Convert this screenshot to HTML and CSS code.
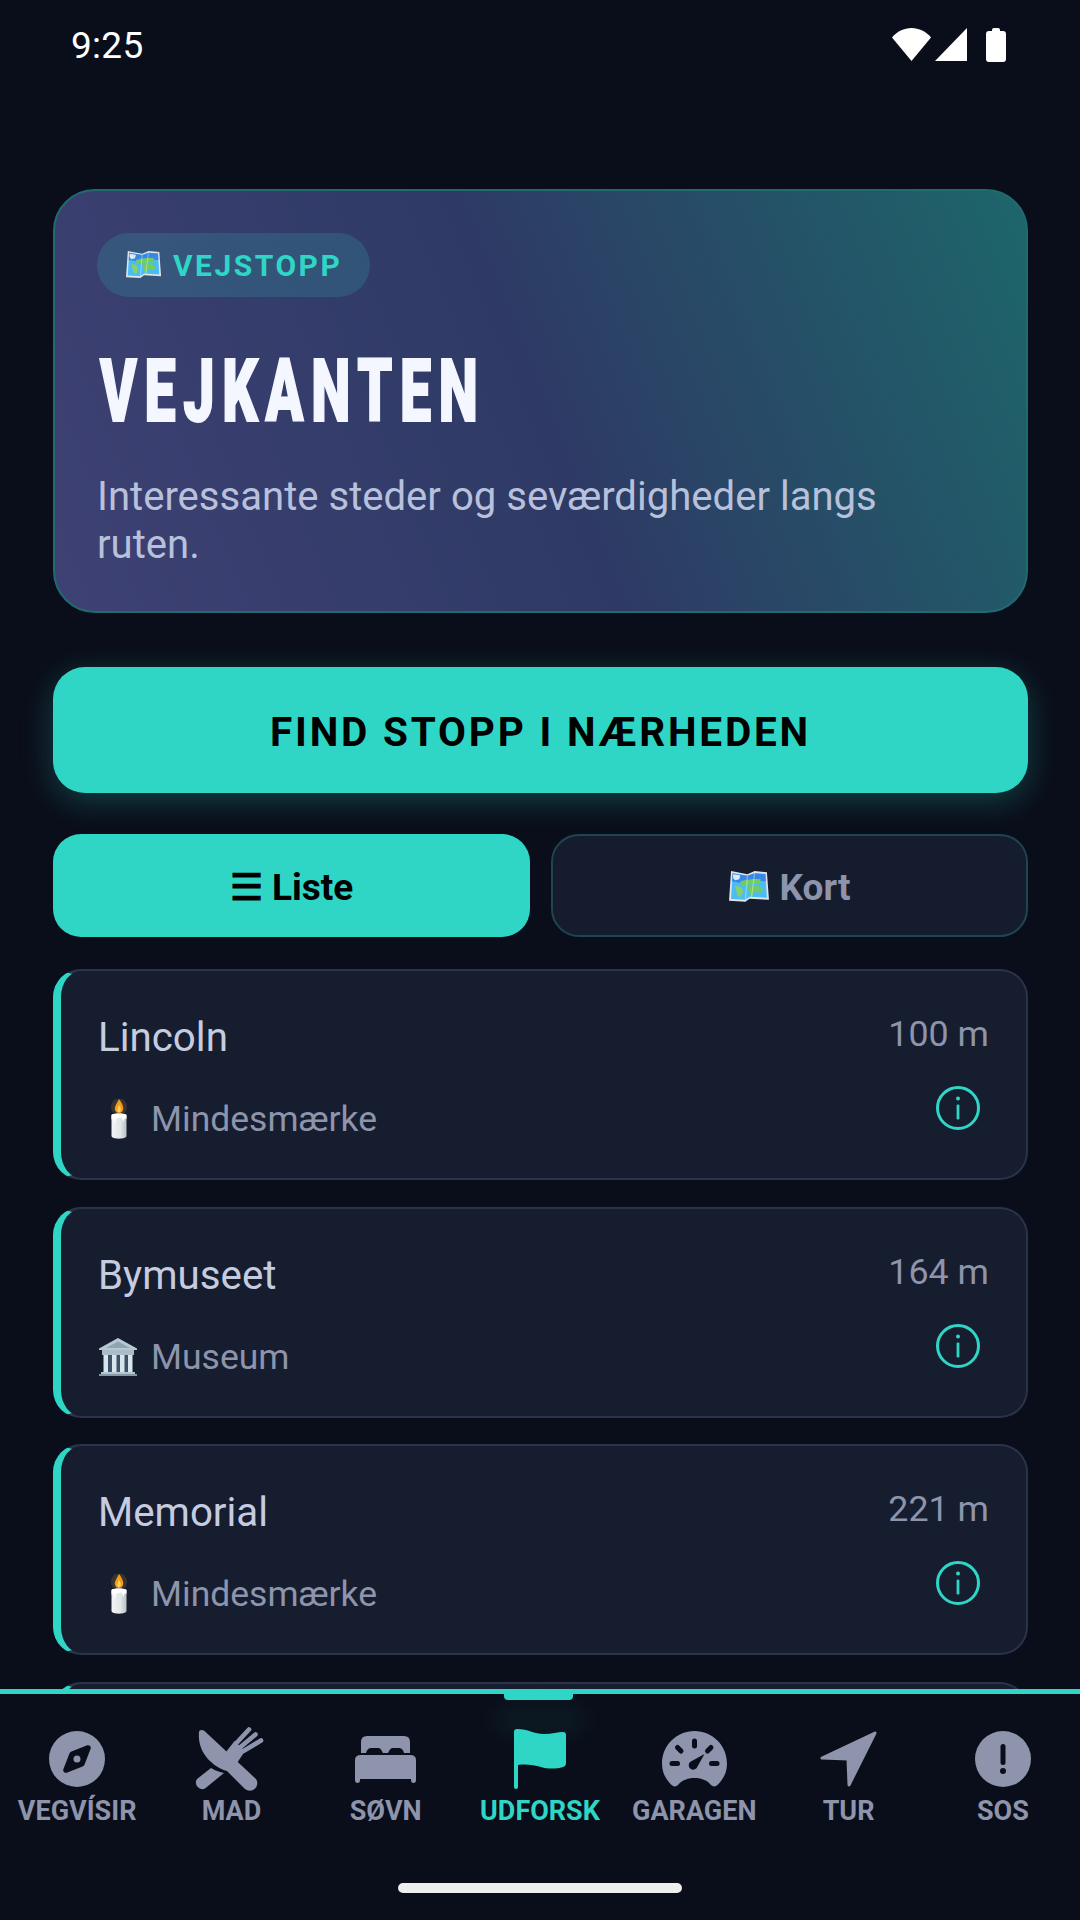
FILE: index.html
```html
<!DOCTYPE html>
<html lang="da">
<head>
<meta charset="utf-8">
<title>Vejkanten</title>
<link rel="stylesheet" href="styles.css">
</head>
<body>
<svg class="defs" width="0" height="0" aria-hidden="true">
  <defs>
    <symbol id="map" viewBox="0 0 40 33">
      <path d="M2 1 L18 4 L25 1 L37 2 L39 29 L20 28 L16 31 L0 30 Z" fill="#dfe5e9"/>
      <path d="M3.500 3 L18 5.500 L25 3 L35.500 3.800 L37 27 L20 26 L16 29 L2 28.300 Z" fill="#4cbcf5"/>
      <path d="M3.500 3 L18 5.500 L25 3 L35.500 3.800 L36 11 L22 10 L14 13 L3 11 Z" fill="#3a86e6"/>
      <path d="M4 4 L11 5 L10 9 L6 10 L4 8 Z" fill="#dcecf5"/>
      <path d="M11 11 C17 9 24 8 31 9 L30 14 C24 13 18 14 12 16 Z" fill="#72cc5e"/>
      <path d="M6 15 L12 17 L14 21 L11 27 L8 24 Z" fill="#86d268"/>
      <path d="M18 16 L27 15 L33 18 L31 22 L25 21 L23 26 L20 23 Z" fill="#72cc5e"/>
      <path d="M18 5.500 L16 29 M25 3 L22 26" stroke="#ffffff" stroke-opacity=".35" stroke-width="1.200"/>
    </symbol>
    <symbol id="candle" viewBox="0 0 24 40">
      <defs>
        <linearGradient id="wax" x1="0" x2="1" y1="0" y2="0">
          <stop offset="0" stop-color="#f2f4f5"/>
          <stop offset=".6" stop-color="#e2e6e8"/>
          <stop offset="1" stop-color="#b9c0c4"/>
        </linearGradient>
      </defs>
      <ellipse cx="12" cy="8" rx="8" ry="9" fill="#f6b73c" fill-opacity=".15"/>
      <path d="M12 0 C15 4 17 8 16 11 C15 15 9 15 8 11 C7 8 10 4 12 0 Z" fill="#f59a1b"/>
      <path d="M12 6 C13.500 8 14 10 13.500 12 C12.500 13.500 11 13.500 10.500 12 C10 10.500 11 8 12 6 Z" fill="#ffd65a"/>
      <path d="M4.500 16 C4.500 14 19.500 14 19.500 16 L19.500 37 C19.500 40.500 4.500 40.500 4.500 37 Z" fill="url(#wax)"/>
      <path d="M4.500 16 C8 14 16 14 19.500 16 L19.500 20 L17.500 19 L16.500 23 L14.500 18.500 L9 19.500 L7.500 25 L6.500 19.500 L4.500 20.500 Z" fill="#ffffff"/>
    </symbol>
    <symbol id="museum" viewBox="0 0 40 38">
      <path d="M20 0 L39 10.500 V12 H1 V10.500 Z" fill="#b7c8d3"/>
      <path d="M20 3.500 L32 10 H8 Z" fill="#8fa5b4"/>
      <rect x="4" y="12" width="32" height="5" fill="#a9bcc8"/>
      <rect x="8" y="17" width="24" height="17" fill="#3d5168"/>
      <path d="M5.500 17 h4.500 v17 h-4.500 z M14 17 h4.500 v17 h-4.500 z M22 17 h4.500 v17 h-4.500 z M30 17 h4.500 v17 h-4.500 z" fill="#d8e5ec"/>
      <rect x="3" y="34" width="34" height="2" fill="#b5c6d1"/>
      <rect x="1" y="36" width="38" height="2" fill="#8499a8"/>
    </symbol>
    <symbol id="info" viewBox="0 0 44 44">
      <circle cx="22" cy="22" r="20.500" fill="none" stroke="currentColor" stroke-width="3"/>
      <rect x="20.600" y="18.500" width="2.800" height="15" rx="1.200" fill="currentColor"/>
      <circle cx="22" cy="12.500" r="2" fill="currentColor"/>
    </symbol>
  </defs>
</svg>

<div class="screen">
  <header class="status">
    <span class="clock">9:25</span>
    <div class="status-icons">
      <svg class="ic-wifi" viewBox="0 0 39 33"><path d="M0 9.500 C5 3.500 12 0 19.500 0 C27 0 34 3.500 39 9.500 L19.500 33 Z" fill="#fff"/></svg>
      <svg class="ic-signal" viewBox="0 0 32 33"><path d="M32 0 V33 H0 Z" fill="#fff"/></svg>
      <svg class="ic-battery" viewBox="0 0 20 34"><path d="M6 2 Q6 0 8 0 H12 Q14 0 14 2 V3 H17 Q20 3 20 6 V31 Q20 34 17 34 H3 Q0 34 0 31 V6 Q0 3 3 3 H6 Z" fill="#fff"/></svg>
    </div>
  </header>

  <main class="content">
    <section class="hero">
      <div class="badge"><svg class="em-map-sm"><use href="#map"/></svg><span>VEJSTOPP</span></div>
      <h1 class="title"><span class="title-text">VEJKANTEN</span></h1>
      <p class="desc">Interessante steder og seværdigheder langs ruten.</p>
    </section>

    <button class="find">FIND STOPP I NÆRHEDEN</button>

    <div class="tabs">
      <div class="tab tab-on">☰ Liste</div>
      <div class="tab tab-off"><svg class="em-map"><use href="#map"/></svg> Kort</div>
    </div>

    <div class="list">
      <article class="card">
        <div class="card-main">
          <div class="card-name">Lincoln</div>
          <div class="card-cat"><svg class="em-candle"><use href="#candle"/></svg><span>Mindesmærke</span></div>
        </div>
        <div class="card-side">
          <div class="card-dist">100 m</div>
          <svg class="ic-info"><use href="#info"/></svg>
        </div>
      </article>
      <article class="card">
        <div class="card-main">
          <div class="card-name">Bymuseet</div>
          <div class="card-cat"><svg class="em-museum"><use href="#museum"/></svg><span>Museum</span></div>
        </div>
        <div class="card-side">
          <div class="card-dist">164 m</div>
          <svg class="ic-info"><use href="#info"/></svg>
        </div>
      </article>
      <article class="card">
        <div class="card-main">
          <div class="card-name">Memorial</div>
          <div class="card-cat"><svg class="em-candle"><use href="#candle"/></svg><span>Mindesmærke</span></div>
        </div>
        <div class="card-side">
          <div class="card-dist">221 m</div>
          <svg class="ic-info"><use href="#info"/></svg>
        </div>
      </article>
      <article class="card"></article>
    </div>
  </main>

  <nav class="nav">
    <div class="nav-mark"></div>
    <div class="nav-glow"></div>
    <div class="nav-items">
      <div class="nav-item">
        <div class="nav-icon"><svg class="i56" viewBox="0 0 512 512"><path fill="currentColor" d="M256 512A256 256 0 1 0 256 0a256 256 0 1 0 0 512zm50.700-186.900L162.400 380.600c-19.400 7.500-38.500-11.600-31-31l55.500-144.300c3.300-8.500 9.900-15.100 18.400-18.400l144.300-55.500c19.400-7.500 38.500 11.600 31 31L325.100 306.700c-3.200 8.500-9.900 15.100-18.400 18.400zM288 256a32 32 0 1 0 -64 0 32 32 0 1 0 64 0z"/></svg></div>
        <span>VEGVÍSIR</span>
      </div>
      <div class="nav-item">
        <div class="nav-icon"><svg class="i-mad" viewBox="0 5 84 66">
          <path fill="currentColor" d="M10 11 C10 9 13 8 15.500 10 L67 58 A7.500 7.500 0 0 1 56 68 L38 50 C24 46 8 32 10 11 Z"/>
          <path fill="currentColor" d="M22 47 C27 50 31 51 35 52 L16 67.500 A6.500 6.500 0 0 1 8 58 Z"/>
          <path fill="currentColor" d="M37 31 L45.500 20 L56 30 L55 31.500 L48 42 Z"/>
          <path d="M47.500 22 L60 8.500 M51.500 26 L66.500 13.500 M54.500 30 L72 19.500" fill="none" stroke="currentColor" stroke-width="4.600" stroke-linecap="round"/>
        </svg></div>
        <span>MAD</span>
      </div>
      <div class="nav-item">
        <div class="nav-icon"><svg class="i-bed" viewBox="0 0 61 47">
          <path fill="currentColor" d="M6 17 V6 Q6 0 12 0 H49 Q55 0 55 6 V17 L49 17 C48 13 46 12 43 12 H38 C36 12 35 13 33 17 H28 C26 13 25 12 23 12 H17 C14 12 12 13 11 17 Z"/>
          <path fill="currentColor" d="M0 24 Q0 19 6 19 H55 Q61 19 61 24 V44 Q61 47 58.500 47 Q56 47 56 44 V43 H5 V44 Q5 47 2.500 47 Q0 47 0 44 Z"/>
        </svg></div>
        <span>SØVN</span>
      </div>
      <div class="nav-item nav-on">
        <div class="nav-icon"><svg class="i-flag" viewBox="0 0 52 60">
          <path fill="currentColor" d="M0 3 Q0 0 3 0 C14 0 20 5 30 5 C38 5 44 3 49 3 Q52 3 52 6 V34 Q52 37 49 38 C42 40 34 40 27 38 C20 36 12 35 4 36 V58 Q4 60 2 60 Q0 60 0 58 Z"/>
        </svg></div>
        <span>UDFORSK</span>
      </div>
      <div class="nav-item">
        <div class="nav-icon"><svg class="i-gauge" viewBox="0 0 65 56">
          <path fill="currentColor" d="M32.500 0 C50.500 0 65 14.500 65 32.500 C65 41 62 47 56.500 53 C54 56 51 56 49 54 C45 49 39 47 32.500 47 C26 47 20 49 16 54 C14 56 11 56 8.500 53 C3 47 0 41 0 32.500 C0 14.500 14.500 0 32.500 0 Z"/>
          <g stroke="#0a0e1a" stroke-width="5" stroke-linecap="round" fill="none">
            <path d="M32.500 10 V15"/><path d="M15.500 16.500 L19 20"/><path d="M49 16.500 L45.500 20"/><path d="M10 32.500 H15.500"/><path d="M49.500 32.500 H55"/>
          </g>
          <path fill="#0a0e1a" d="M42.500 23 L35.500 35.500 A4.500 4.500 0 1 1 28 31 Z"/>
        </svg></div>
        <span>GARAGEN</span>
      </div>
      <div class="nav-item">
        <div class="nav-icon"><svg class="i-tur" viewBox="0 0 57 56">
          <path fill="currentColor" stroke="currentColor" stroke-width="3" stroke-linejoin="round" d="M55 2 L2 27 L28 28 L29 54 Z"/>
        </svg></div>
        <span>TUR</span>
      </div>
      <div class="nav-item">
        <div class="nav-icon"><svg class="i56" viewBox="0 0 56 56">
          <circle cx="28" cy="28" r="28" fill="currentColor"/>
          <rect x="25.500" y="13" width="5" height="21" rx="2.500" fill="#0a0e1a"/>
          <circle cx="28" cy="40" r="3" fill="#0a0e1a"/>
        </svg></div>
        <span>SOS</span>
      </div>
    </div>
    <div class="home-bar"></div>
  </nav>
</div>
</body>
</html>
```

FILE: styles.css
```css
* { box-sizing: border-box; }
html, body { margin: 0; padding: 0; background: #0a0e1a; }
body { font-family: Roboto, "Liberation Sans", sans-serif; }
.defs { position: absolute; }

.screen {
  width: 1080px;
  height: 1920px;
  display: flex;
  flex-direction: column;
  overflow: hidden;
  background: #0a0e1a;
}

/* status bar */
.status {
  flex: none;
  height: 75px;
  padding: 25px 53px 0 71px;
  display: flex;
  justify-content: space-between;
  align-items: flex-start;
}
.clock { color: #fff; font-size: 37px; line-height: 42px; letter-spacing: .3px; }
.status-icons { display: flex; gap: 4px; padding-top: 3px; padding-right: 21px; }
.ic-wifi { width: 39px; height: 33px; }
.ic-signal { width: 32px; height: 33px; }
.ic-battery { width: 20px; height: 34px; margin-left: 15px; }

/* content */
.content {
  flex: 1;
  min-height: 0;
  overflow: hidden;
  padding: 114px 52px 0 53px;
}

.hero {
  height: 424px;
  border: 2px solid #1f6b6e;
  border-radius: 42px;
  padding: 42px 60px 0 42px;
  background: linear-gradient(68deg, #3e4174 0%, #2e3a65 50%, #1d666a 100%);
}
.badge {
  display: inline-flex;
  align-items: center;
  gap: 11px;
  height: 64px;
  padding: 0 28px 0 29px;
  border-radius: 32px;
  background: rgba(47, 214, 198, .16);
  color: #2fd6c6;
  font-size: 30px;
  font-weight: 700;
  letter-spacing: 2.500px;
}
.em-map-sm { width: 36px; height: 30px; }
.title {
  margin: 44px 0 0 3px;
  color: #f4f7ff;
  font-size: 87px;
  line-height: 100px;
  font-weight: 900;
  white-space: nowrap;
}
.title-text {
  display: inline-block;
  letter-spacing: 12px;
  -webkit-text-stroke: 2px #f4f7ff;
  transform: scaleX(.64);
  transform-origin: left center;
}
.desc {
  margin: 32px 0 0;
  color: #b8c1db;
  font-size: 40.100px;
  line-height: 48px;
}

.find {
  display: block;
  width: 100%;
  height: 126px;
  margin-top: 54px;
  padding: 4px 0 0;
  border: 0;
  border-radius: 32px;
  background: #2fd6c6;
  color: #000;
  font-family: inherit;
  font-size: 40.500px;
  font-weight: 700;
  letter-spacing: 2.800px;
  box-shadow: 0 8px 32px rgba(47, 214, 198, .25);
}

.tabs {
  display: grid;
  grid-template-columns: 1fr 1fr;
  gap: 21px;
  margin-top: 41px;
}
.tab {
  height: 103px;
  padding-top: 3px;
  border-radius: 28px;
  display: flex;
  align-items: center;
  justify-content: center;
  gap: 10px;
  font-size: 37px;
  font-weight: 700;
}
.tab-on { background: #2fd6c6; color: #000; }
.tab-off { background: #151c2e; border: 2px solid #1e4650; color: #8d94ab; }
.em-map { width: 41px; height: 34px; }

.list {
  display: flex;
  flex-direction: column;
  gap: 26.500px;
  margin-top: 32px;
}
.card {
  flex: none;
  height: 211px;
  border: 2px solid #2a3349;
  border-left: 8px solid #2fd6c6;
  border-radius: 28px;
  background: #161d2f;
  padding: 0 37px 0 37px;
  display: flex;
  justify-content: space-between;
}
.card-main { padding-top: 44px; }
.card-name { color: #c6cce0; font-size: 40.300px; line-height: 46px; }
.card-cat {
  display: flex;
  align-items: center;
  gap: 12px;
  margin-top: 38px;
  color: #8d94ab;
  font-size: 35.500px;
  line-height: 40px;
}
.em-candle { width: 24px; height: 40px; margin-left: 9px; margin-right: 8px; }
.em-museum { width: 40px; height: 38px; margin-right: 1px; }
.card-side {
  display: flex;
  flex-direction: column;
  align-items: flex-end;
  padding-top: 43px;
}
.card-dist { color: #8d94ab; font-size: 35.800px; line-height: 40px; }
.ic-info { width: 44px; height: 44px; margin: 32px 9px 0 0; color: #2fd6c6; }

/* bottom navigation */
.nav {
  flex: none;
  position: relative;
  height: 231px;
  border-top: 5px solid #2fd6c6;
  background: #0a0e1a;
}
.nav-mark {
  position: absolute;
  top: -1px;
  left: 504px;
  width: 69px;
  height: 7px;
  border-radius: 0 0 4px 4px;
  background: #2fd6c6;
}
.nav-glow {
  position: absolute;
  top: 6px;
  left: 490px;
  width: 100px;
  height: 40px;
  border-radius: 50%;
  background: rgba(47, 214, 198, .05);
  filter: blur(10px);
}
.nav-items {
  display: grid;
  grid-template-columns: repeat(7, 1fr);
  padding-top: 32px;
}
.nav-item {
  display: flex;
  flex-direction: column;
  align-items: center;
  color: #8d94ab;
  font-size: 27px;
  font-weight: 700;
  line-height: 30px;
  white-space: nowrap;
}
.nav-on { color: #2fd6c6; }
.nav-icon {
  height: 66px;
  display: flex;
  align-items: center;
  justify-content: center;
  margin-bottom: 4px;
}
.i56 { width: 56px; height: 56px; }
.i-mad { width: 84px; height: 66px; }
.i-bed { width: 61px; height: 47px; }
.i-flag { width: 52px; height: 60px; }
.i-gauge { width: 65px; height: 56px; }
.i-tur { width: 57px; height: 56px; }
.home-bar {
  position: absolute;
  top: 189px;
  left: 398px;
  width: 284px;
  height: 10px;
  border-radius: 5px;
  background: #eeeeee;
}
```
